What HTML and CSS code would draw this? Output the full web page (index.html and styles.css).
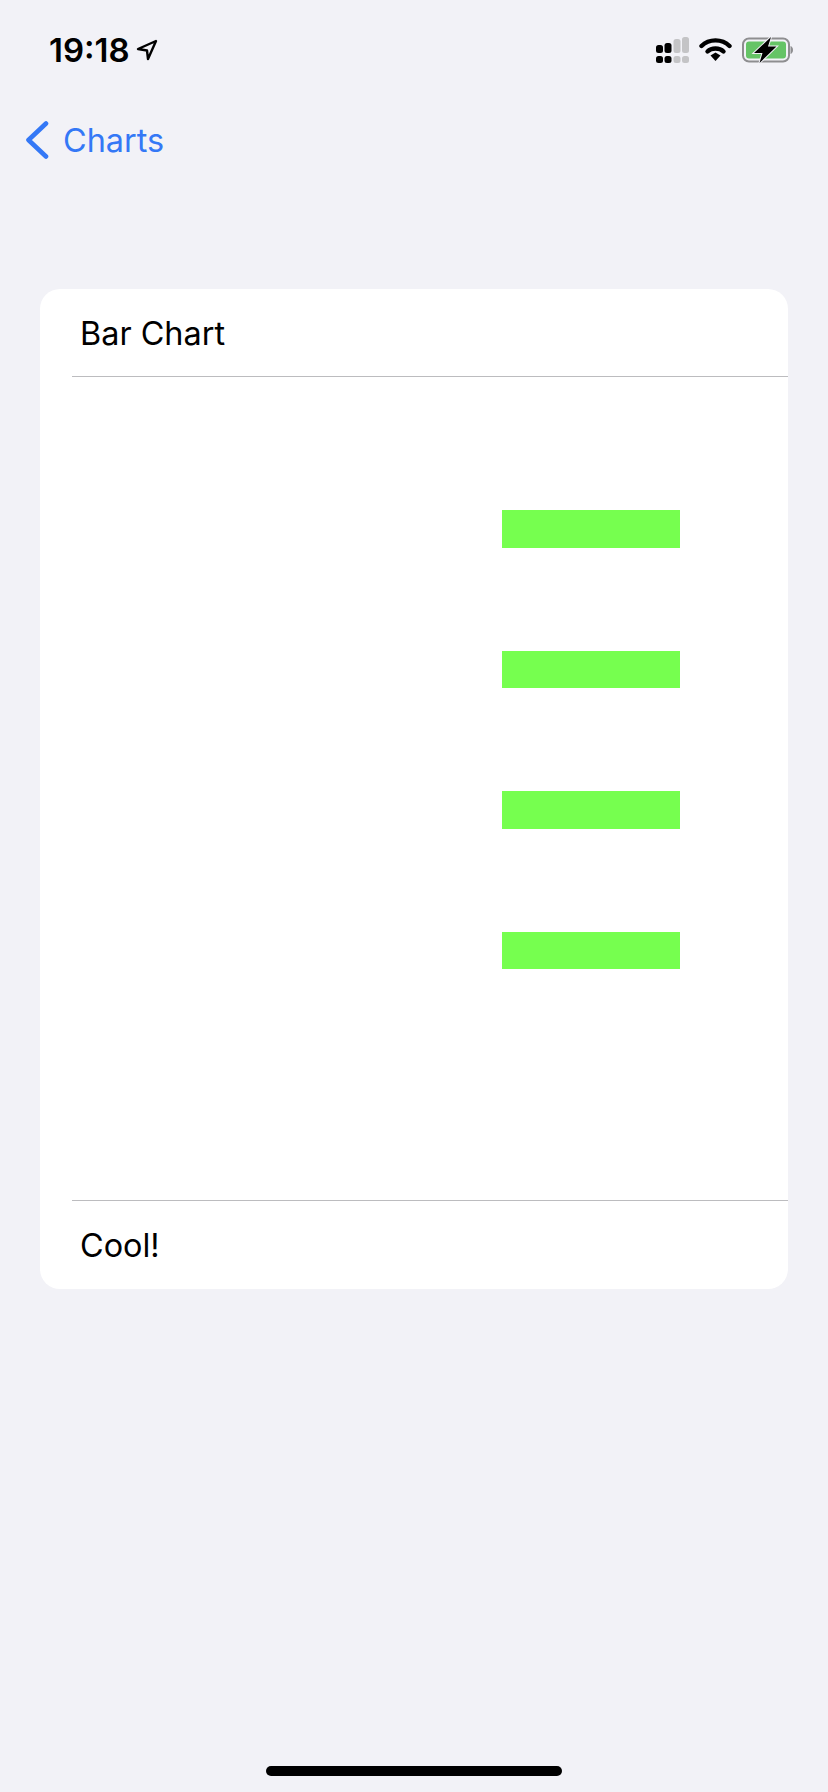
FILE: index.html
```html
<!DOCTYPE html>
<html lang="en">
<head>
    <meta charset="UTF-8">
    <meta name="viewport" content="width=device-width, initial-scale=1.0">
    <title>Bar Chart</title>
    <link rel="stylesheet" href="styles.css">
</head>
<body>
    <div class="status-bar">
        <div class="status-left">
            <span class="time">19:18</span>
            <svg class="location" width="22" height="22" viewBox="0 0 22 22">
                <path d="M20 2 L2 10 L11 11.5 L12 20 Z" fill="none" stroke="#000" stroke-width="2.4" stroke-linejoin="round"/>
            </svg>
        </div>
        <div class="status-right">
            <svg class="signal" width="33" height="26" viewBox="0 0 33 26">
                <rect x="0" y="8" width="7" height="8" rx="2.5" fill="#000"/>
                <rect x="0" y="19" width="7" height="7" rx="2.5" fill="#000"/>
                <rect x="8.5" y="6" width="7" height="10" rx="2.5" fill="#000"/>
                <rect x="8.5" y="19" width="7" height="7" rx="2.5" fill="#000"/>
                <rect x="17.5" y="2" width="7" height="14" rx="2.5" fill="#c4c4c6"/>
                <rect x="17.5" y="19" width="7" height="7" rx="2.5" fill="#c4c4c6"/>
                <rect x="26" y="0" width="7" height="16" rx="2.5" fill="#c4c4c6"/>
                <rect x="26" y="19" width="7" height="7" rx="2.5" fill="#c4c4c6"/>
            </svg>
            <svg class="wifi" width="33" height="24" viewBox="0 0 33 24">
                <path d="M2.5 9 C10 1.5 23 1.5 30.5 9" fill="none" stroke="#000" stroke-width="4.4" stroke-linecap="round"/>
                <path d="M8.5 14.5 C12.5 10.5 20.5 10.5 24.5 14.5" fill="none" stroke="#000" stroke-width="4.4" stroke-linecap="round"/>
                <path d="M11.5 18.5 L16.5 15.5 L21.5 18.5 L16.5 24 Z" fill="#000"/>
            </svg>
            <svg class="battery" width="51" height="26" viewBox="0 0 51 26">
                <rect x="1" y="1.5" width="46" height="23" rx="6" fill="none" stroke="#8e8e90" stroke-width="2"/>
                <rect x="4" y="4.5" width="40" height="17" rx="3" fill="#65c466"/>
                <path d="M48.5 9 C50 9.5 51 11 51 13 C51 15 50 16.5 48.5 17 Z" fill="#8e8e90"/>
                <path d="M29 0 L12 16 H20.5 L17.5 26 L34.5 9.5 H26 Z" fill="#000" stroke="#f2f2f7" stroke-width="2" paint-order="stroke"/>
            </svg>
        </div>
    </div>

    <div class="nav">
        <svg class="back-icon" width="24" height="38" viewBox="0 0 24 38">
            <path d="M21 2.5 L3.5 19 L21 35.5" fill="none" stroke="#3478f6" stroke-width="4.6" stroke-linecap="round" stroke-linejoin="round"/>
        </svg>
        <span class="back-label">Charts</span>
    </div>

    <div class="card">
        <div class="card-row">Bar Chart</div>
        <div class="chart">
            <div class="bar"></div>
            <div class="bar"></div>
            <div class="bar"></div>
            <div class="bar"></div>
        </div>
        <div class="card-row card-footer">Cool!</div>
    </div>

    <div class="home-indicator"></div>
</body>
</html>
```

FILE: styles.css
```css
* {
    box-sizing: border-box;
}
body {
    margin: 0;
    height: 1792px;
    display: flex;
    flex-direction: column;
    background-color: #f2f2f7;
    font-family: Inter, "Liberation Sans", sans-serif;
    color: #000;
    overflow: hidden;
}
.status-bar {
    height: 100px;
    padding: 30px 35px 0 49px;
    display: flex;
    justify-content: space-between;
    align-items: flex-start;
}
.status-left {
    display: flex;
    align-items: center;
    gap: 6px;
}
.time {
    font-size: 33px;
    line-height: 40px;
    font-weight: 600;
}
.status-right {
    display: flex;
    align-items: flex-start;
    gap: 10px;
    padding-top: 7px;
}
.nav {
    height: 80px;
    padding: 0 0 0 25px;
    display: flex;
    align-items: center;
    gap: 14px;
}
.back-label {
    font-size: 32.4px;
    color: #3478f6;
}
.card {
    margin: 109px 40px 0;
    height: 1000px;
    border-radius: 20px;
    background-color: #fff;
    display: flex;
    flex-direction: column;
}
.card-row {
    height: 88px;
    flex-shrink: 0;
    margin-left: 32px;
    padding: 2px 0 0 8px;
    display: flex;
    align-items: center;
    font-size: 32.4px;
    border-bottom: 1px solid #bcbcbf;
}
.card-footer {
    height: 89px;
    padding-top: 0;
    border-bottom: none;
    border-top: 1px solid #bcbcbf;
}
.chart {
    flex: 1;
    padding: 133px 108px 0 0;
    display: flex;
    flex-direction: column;
    align-items: flex-end;
    gap: 103px;
}
.bar {
    width: 178px;
    height: 37.5px;
    background-color: #76ff4f;
}
.home-indicator {
    width: 296px;
    height: 10px;
    margin: auto auto 16px;
    border-radius: 5px;
    background-color: #000;
}
```
